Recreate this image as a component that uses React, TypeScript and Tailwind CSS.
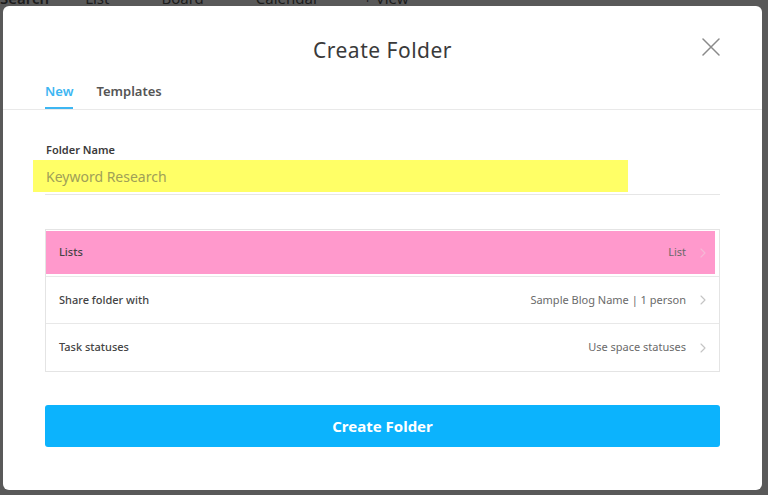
import React, { useState } from 'react';

const rows = [
  { label: 'Lists', value: 'List', highlight: true },
  { label: 'Share folder with', value: 'Sample Blog Name | 1 person', highlight: false },
  { label: 'Task statuses', value: 'Use space statuses', highlight: false },
];

const Chevron = ({ color }: { color: string }) => (
  <svg width="6" height="10" viewBox="0 0 6 10" fill="none" className="shrink-0">
    <path d="M1 1l4 4-4 4" stroke={color} strokeWidth="1.1" strokeLinecap="round" strokeLinejoin="round" />
  </svg>
);

const App: React.FC = () => {
  const [tab, setTab] = useState('new');

  return (
    <div
      className="relative w-[768px] h-[495px] overflow-hidden bg-[#595959]"
      style={{ fontFamily: '"Noto Sans", "Open Sans", sans-serif' }}
    >
      {/* app behind the overlay */}
      <div className="flex items-end gap-[34px] -mt-[10px] h-[17px] text-[15px] leading-[17px] text-[#1c1c1c]">
        <span className="font-semibold">Search</span>
        <span className="ml-[2px]">List</span>
        <span className="ml-[18px]">Board</span>
        <span className="ml-[18px]">Calendar</span>
        <span className="ml-[10px]">+ View</span>
      </div>

      {/* modal */}
      <div className="absolute left-[3px] top-[6px] w-[759px] h-[484px] bg-white rounded-[6px] flex flex-col">
        <div className="relative pt-[30px]">
          <h1 className="text-center text-[21px] leading-[28px] text-[#3a3a3a] font-normal tracking-[0.5px]">
            Create Folder
          </h1>
          <button className="absolute top-[32px] right-[42px] w-[18px] h-[18px]">
            <svg width="18" height="18" viewBox="0 0 18 18" fill="none">
              <path d="M1 1l16 16M17 1L1 17" stroke="#8a8a8a" strokeWidth="1.5" strokeLinecap="round" />
            </svg>
          </button>
        </div>

        <div className="mt-[18px] flex gap-[23px] px-[42px] border-b border-[#e9e9e9]">
          <button
            onClick={() => setTab('new')}
            className={`pb-[7px] text-[13px] leading-[18px] font-semibold border-b-2 ${
              tab === 'new' ? 'text-[#3db6f2] border-[#3db6f2]' : 'text-[#555] border-transparent'
            }`}
          >
            New
          </button>
          <button
            onClick={() => setTab('templates')}
            className={`pb-[7px] text-[13px] leading-[18px] font-semibold border-b-2 ${
              tab === 'templates' ? 'text-[#3db6f2] border-[#3db6f2]' : 'text-[#555] border-transparent'
            }`}
          >
            Templates
          </button>
        </div>

        <div className="px-[42px] flex flex-col">
          <label className="mt-[33px] pl-[1px] text-[11px] leading-[14px] font-semibold text-[#3a3a3a]">
            Folder Name
          </label>
          <div className="mt-[3px] -ml-[12px] w-[595px] h-[32px] bg-[#ffff66] flex items-center pl-[13px] text-[14px] text-[#a0a058]">
            Keyword Research
          </div>
          <div className="mt-[2px] h-px bg-[#e6e6e6]" />

          <div className="mt-[34px] border border-[#e4e4e4] flex flex-col">
            {rows.map((row, index) => (
              <div
                key={row.label}
                className={`h-[47px] flex ${index < rows.length - 1 ? 'border-b border-[#e8e8e8]' : ''} ${
                  row.highlight ? 'pt-[1px] pb-[2px] pr-[4px]' : ''
                }`}
              >
                <div
                  className={`flex-1 flex items-center justify-between pl-[13px] ${
                    row.highlight ? 'bg-[#ff99cc] pr-[9px]' : 'pr-[13px]'
                  }`}
                >
                  <span className="text-[11px] font-medium text-[#444]">{row.label}</span>
                  <span className="flex items-center gap-[14px] text-[11px] text-[#6a6a6a]">
                    {row.value}
                    <Chevron color={row.highlight ? '#f5b8d6' : '#c4c4c4'} />
                  </span>
                </div>
              </div>
            ))}
          </div>

          <button className="mt-[33px] h-[42px] rounded-[3px] bg-[#0cb3fd] text-white text-[15px] font-bold">
            Create Folder
          </button>
        </div>
      </div>
    </div>
  );
};

export default App;
